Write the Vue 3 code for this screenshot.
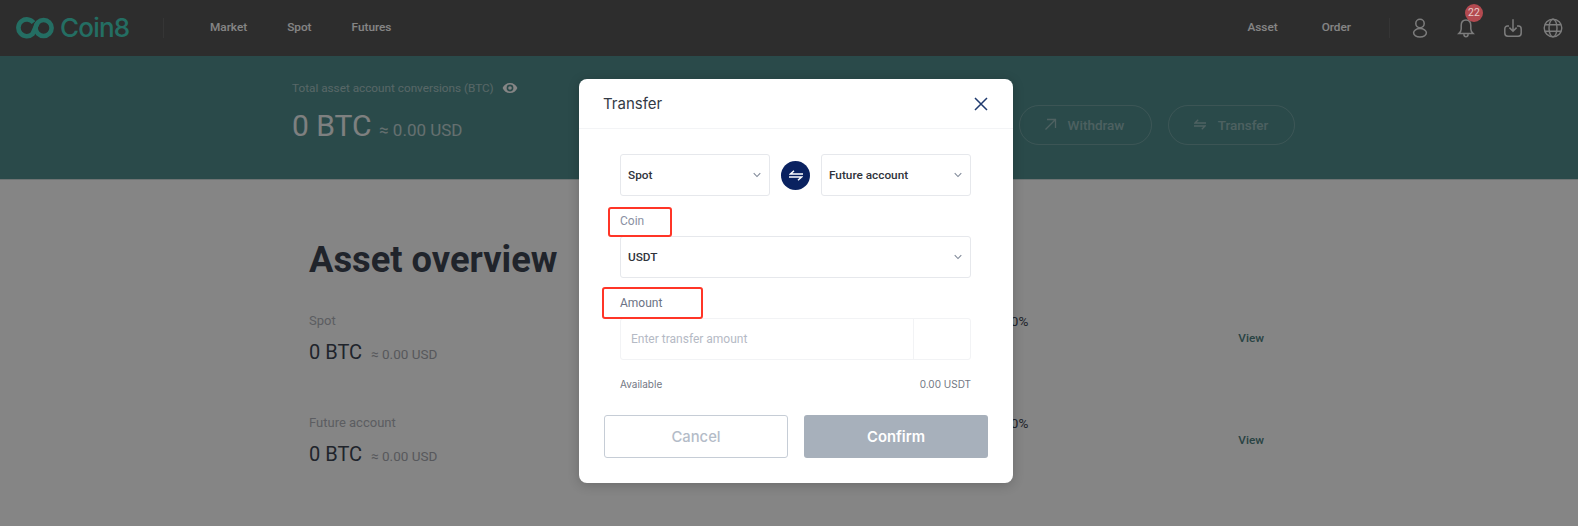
<script setup>
const nav = ['Market', 'Spot', 'Futures']

const accounts = [
  { name: 'Spot' },
  { name: 'Future account' }
]
</script>

<template>
  <div class="page">
    <header class="topbar">
      <div class="logo">
        <svg width="38" height="22" viewBox="0 0 38 22" fill="none">
          <path d="M17.5 5.7A8.4 8.4 0 1 0 16.5 17L21.5 6" stroke="#45d4bf" stroke-width="4.6" />
          <circle cx="27.6" cy="11" r="8" stroke="#45d4bf" stroke-width="4.6" />
        </svg>
        <span class="logoText">Coin8</span>
      </div>
      <div class="sep sepLeft"></div>
      <nav class="nav">
        <a v-for="item in nav" :key="item">{{ item }}</a>
      </nav>
      <div class="topRight">
        <a class="topLink">Asset</a>
        <a class="topLink">Order</a>
        <div class="sep sepRight"></div>
        <svg class="user" width="18" height="20" viewBox="0 0 18 20" fill="none" stroke="#eee" stroke-width="1.5">
          <circle cx="9" cy="5.5" r="4.2" />
          <ellipse cx="9" cy="14.8" rx="6.4" ry="4.2" />
        </svg>
        <div class="bell">
          <svg width="18" height="20" viewBox="0 0 18 20" fill="none" stroke="#eee" stroke-width="1.5">
            <path d="M9 2C5.6 2 4.2 4.6 4.2 7.5V11C4.2 13 3.2 14.4 1.8 15.6H16.2C14.8 14.4 13.8 13 13.8 11V7.5C13.8 4.6 12.4 2 9 2Z" />
            <path d="M6.8 16.2C7 18 8 18.8 9 18.8S11 18 11.2 16.2" />
          </svg>
          <span class="badge">22</span>
        </div>
        <svg class="download" width="20" height="20" viewBox="0 0 20 20" fill="none" stroke="#eee" stroke-width="1.5">
          <path d="M6 8H4.5C3 8 1.8 9.2 1.8 11V15C1.8 17 3 18.2 4.8 18.2H15.2C17 18.2 18.2 17 18.2 15V11C18.2 9.2 17 8 15.5 8H14" />
          <path d="M10 1.2V13M6.4 9.6L10 13.2L13.6 9.6" />
        </svg>
        <svg class="globe" width="20" height="20" viewBox="0 0 20 20" fill="none" stroke="#eee" stroke-width="1.4">
          <circle cx="10" cy="10" r="8.8" />
          <ellipse cx="10" cy="10" rx="4" ry="8.8" />
          <path d="M2 6.8H18M2 13.2H18" />
        </svg>
      </div>
    </header>

    <section class="banner">
      <div class="bannerLeft">
        <div class="totalLabel">
          Total asset account conversions (BTC)
          <svg width="16" height="12" viewBox="0 0 16 12" fill="#fff">
            <path d="M8 1C4.6 1 1.8 3 .6 6C1.8 9 4.6 11 8 11S14.2 9 15.4 6C14.2 3 11.4 1 8 1ZM8 9.4A3.4 3.4 0 1 1 8 2.6A3.4 3.4 0 0 1 8 9.4ZM8 4.2A1.8 1.8 0 1 0 8 7.8A1.8 1.8 0 0 0 8 4.2Z" />
          </svg>
        </div>
        <div class="totalValue">0 BTC <small>≈ 0.00 USD</small></div>
      </div>
      <div class="bannerBtns">
        <a class="pill pillWithdraw">
          <svg width="13" height="13" viewBox="0 0 13 13" fill="none" stroke="#fff" stroke-width="1.3">
            <path d="M1.5 11.5L11.5 1.5M3 1.5H11.5V10" />
          </svg>
          Withdraw
        </a>
        <a class="pill pillTransfer">
          <svg width="12" height="11" viewBox="0 0 12 11" fill="none" stroke="#fff" stroke-width="1.3">
            <path d="M12 4H1L4.2 .8M0 7H11L7.8 10.2" />
          </svg>
          Transfer
        </a>
      </div>
    </section>

    <main class="content">
      <h1>Asset overview</h1>
      <div v-for="acc in accounts" :key="acc.name" class="assetRow">
        <div class="assetLeft">
          <div class="assetName">{{ acc.name }}</div>
          <div class="assetValue">0 BTC <small>≈ 0.00 USD</small></div>
        </div>
        <div class="assetPercent">0.00%</div>
        <a class="assetView">View</a>
      </div>
    </main>

    <div class="mask">
      <div class="dialog">
        <div class="dialogHead">
          <span>Transfer</span>
          <svg width="14" height="14" viewBox="0 0 14 14" fill="none" stroke="#1f3a6e" stroke-width="1.5">
            <path d="M1 1L13 13M13 1L1 13" />
          </svg>
        </div>
        <div class="dialogBody">
          <div class="fromTo">
            <div class="select">
              <span>Spot</span>
              <svg class="chev" width="8" height="6" viewBox="0 0 9 6" fill="none" stroke="#7f8898" stroke-width="1.2">
                <path d="M.8 1L4.5 4.8L8.2 1" />
              </svg>
            </div>
            <div class="swap">
              <svg width="14" height="11" viewBox="0 0 14 11" fill="none" stroke="#fff" stroke-width="1.5">
                <path d="M14 4H1.5L5 .8M0 7H12.5L9 10.2" />
              </svg>
            </div>
            <div class="select">
              <span>Future account</span>
              <svg class="chev" width="8" height="6" viewBox="0 0 9 6" fill="none" stroke="#7f8898" stroke-width="1.2">
                <path d="M.8 1L4.5 4.8L8.2 1" />
              </svg>
            </div>
          </div>
          <div class="fieldLabel labelCoin">Coin</div>
          <div class="select">
            <span>USDT</span>
            <svg class="chev" width="8" height="6" viewBox="0 0 9 6" fill="none" stroke="#7f8898" stroke-width="1.2">
              <path d="M.8 1L4.5 4.8L8.2 1" />
            </svg>
          </div>
          <div class="fieldLabel labelAmount">Amount</div>
          <div class="amountBox">
            <div class="amountInput">Enter transfer amount</div>
            <div class="amountUnit"></div>
          </div>
          <div class="available">
            <span>Available</span>
            <span>0.00 USDT</span>
          </div>
        </div>
        <div class="dialogBtns">
          <button class="btnCancel">Cancel</button>
          <button class="btnConfirm">Confirm</button>
        </div>
        <div class="mark markCoin"></div>
        <div class="mark markAmount"></div>
      </div>
    </div>
  </div>
</template>

<style>
html, body {
  margin: 0;
  height: 100%;
  overflow: hidden;
  background: #fff;
}
</style>

<style scoped>
.page {
  position: relative;
  height: 526px;
  overflow: hidden;
  font-family: Roboto, "Liberation Sans", sans-serif;
  color: #1c2230;
}

.topbar {
  height: 56px;
  background: #575757;
  display: flex;
  align-items: center;
  padding-left: 16px;
  box-sizing: border-box;
}
.logo {
  width: 147px;
  display: flex;
  align-items: center;
  gap: 6px;
  padding-bottom: 1px;
  box-sizing: border-box;
}
.logoText {
  font-family: Inter, Roboto, sans-serif;
  font-size: 26px;
  font-weight: 500;
  letter-spacing: -0.8px;
  color: #45d4bf;
}
.sep {
  width: 1px;
  height: 20px;
  background: #666;
}
.nav {
  display: flex;
  gap: 40px;
  margin-left: 46px;
  padding-bottom: 3px;
  font-size: 11.8px;
  font-weight: 500;
  color: #fff;
}
.topRight {
  margin-left: auto;
  display: flex;
  align-items: center;
  color: #fff;
}
.topLink {
  padding-bottom: 3px;
  font-size: 11.8px;
  font-weight: 500;
  margin-right: 44px;
}
.topLink:nth-child(2) {
  margin-right: 38px;
}
.user {
  margin-left: 21px;
}
.bell {
  margin-left: 28px;
  height: 20px;
  position: relative;
}
.badge {
  position: absolute;
  z-index: 2;
  left: 8px;
  top: -14px;
  width: 18px;
  height: 18px;
  border-radius: 50%;
  background: #b34a50;
  color: #e6caca;
  font-size: 10.5px;
  line-height: 18px;
  text-align: center;
}
.download {
  margin-left: 28px;
}
.globe {
  margin-left: 20px;
  margin-right: 15px;
}

.banner {
  height: 124px;
  background: #518e8e;
  border-bottom: 1px solid #d2dcdc;
  display: flex;
  padding: 0 283px 0 292px;
  box-sizing: border-box;
}
.bannerLeft {
  padding-top: 25px;
}
.totalLabel {
  display: flex;
  align-items: center;
  gap: 8px;
  font-size: 11.75px;
  line-height: 14px;
  color: rgba(255, 255, 255, 0.5);
}
.totalValue {
  margin-top: 13px;
  font-size: 30px;
  line-height: 36px;
  color: #fff;
  opacity: 0.92;
}
.totalValue small {
  font-size: 17px;
  opacity: 0.7;
}
.bannerBtns {
  margin-left: auto;
  display: flex;
  gap: 16px;
  padding-top: 49px;
}
.pill {
  height: 40px;
  box-sizing: border-box;
  border: 1px solid rgba(255, 255, 255, 0.2);
  border-radius: 20px;
  display: flex;
  align-items: center;
  justify-content: center;
  gap: 12px;
  padding-bottom: 1px;
  font-size: 13.5px;
  font-weight: 500;
  color: rgba(255, 255, 255, 0.4);
}
.pill svg {
  opacity: 0.4;
}
.pillWithdraw {
  width: 133px;
  gap: 11px;
  padding-right: 3px;
}
.pillTransfer {
  width: 127px;
  padding-right: 1px;
}

.content {
  background: #fff;
  padding: 57px 314px 0 309px;
}
.content h1 {
  margin: 0;
  font-size: 36.3px;
  line-height: 46px;
  font-weight: 700;
  color: #3e4654;
}
.assetRow {
  display: flex;
  height: 102px;
}
.content h1 + .assetRow {
  margin-top: 30px;
}
.assetLeft {
  flex: 1;
}
.assetName {
  font-size: 13px;
  line-height: 16px;
  color: #b0b3ba;
}
.assetValue {
  margin-top: 10px;
  font-size: 20px;
  line-height: 26px;
  color: #3e4654;
}
.assetValue small {
  margin-left: 4px;
  font-size: 13.5px;
  color: #a8aab0;
}
.assetPercent {
  font-size: 13.5px;
  line-height: 16px;
  color: #3e4654;
}
.assetView {
  margin-left: 210px;
  margin-top: 17px;
  font-size: 11.8px;
  line-height: 16px;
  font-weight: 500;
  color: #4f8182;
}

.mask {
  position: absolute;
  z-index: 1;
  inset: 0;
  background: rgba(0, 0, 0, 0.48);
  display: flex;
  justify-content: center;
  align-items: flex-start;
  padding: 79px 0 0 14px;
  box-sizing: border-box;
}
.dialog {
  position: relative;
  width: 434px;
  height: 404px;
  background: #fff;
  border-radius: 8px;
  box-shadow: 0 2px 12px rgba(0, 0, 0, 0.2);
}
.dialogHead {
  height: 50px;
  box-sizing: border-box;
  border-bottom: 1px solid #f3f4f6;
  display: flex;
  align-items: center;
  justify-content: space-between;
  padding: 0 25px 0 24px;
  font-family: Inter, Roboto, sans-serif;
  font-size: 15px;
  color: #333a45;
}
.dialogBody {
  padding: 25px 42px 0 41px;
}
.fromTo {
  display: flex;
  align-items: center;
}
.fromTo .select {
  width: 150px;
}
.swap {
  width: 29px;
  height: 29px;
  margin: 0 11px;
  border-radius: 50%;
  background: #0a2260;
  display: flex;
  align-items: center;
  justify-content: center;
}
.select {
  height: 42px;
  box-sizing: border-box;
  border: 1px solid #e6e8ec;
  border-radius: 3px;
  display: flex;
  align-items: center;
  justify-content: space-between;
  padding: 0 8px 0 7px;
  font-size: 11.8px;
  font-weight: 500;
  color: #2f333b;
}
.chev {
  flex: none;
}
.fieldLabel {
  font-size: 12px;
  color: #8a90a2;
  line-height: 16px;
}
.labelCoin {
  padding: 17px 0 7px;
}
.labelAmount {
  padding: 17px 0 7px;
  color: #6c7384;
}
.amountBox {
  height: 42px;
  box-sizing: border-box;
  border: 1px solid #f2f3f5;
  border-radius: 3px;
  display: flex;
}
.amountInput {
  flex: 1;
  padding-left: 10px;
  line-height: 40px;
  font-size: 12px;
  color: #b5bac5;
}
.amountUnit {
  width: 56px;
  border-left: 1px solid #f2f3f5;
}
.available {
  display: flex;
  justify-content: space-between;
  margin-top: 17px;
  font-family: Inter, Roboto, sans-serif;
  font-size: 10px;
  line-height: 14px;
  color: #737884;
}
.dialogBtns {
  display: flex;
  gap: 16px;
  padding: 24px 25px 0;
}
.dialogBtns button {
  width: 184px;
  height: 43px;
  box-sizing: border-box;
  border-radius: 3px;
  font-family: Inter, Roboto, sans-serif;
  font-size: 14.8px;
}
.btnCancel {
  background: #fff;
  border: 1.5px solid #c6cdd6;
  color: #b4bcc8;
  font-weight: 500;
}
.btnConfirm {
  background: #a7b0bb;
  border: none;
  color: #fff;
  font-weight: 600;
}
.mark {
  position: absolute;
  box-sizing: border-box;
  border: 2px solid #ff3527;
  border-radius: 3px;
}
.markCoin {
  left: 29px;
  top: 128px;
  width: 64px;
  height: 30px;
}
.markAmount {
  left: 23px;
  top: 208px;
  width: 101px;
  height: 32px;
}
</style>
